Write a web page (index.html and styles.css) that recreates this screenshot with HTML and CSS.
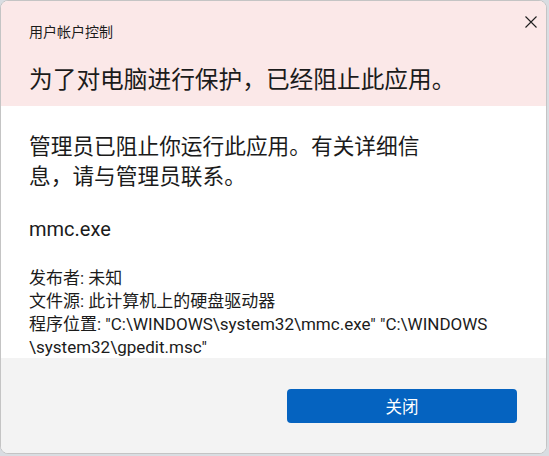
FILE: index.html
```html
<!DOCTYPE html>
<html lang="zh-CN">
<head>
<meta charset="utf-8">
<link rel="stylesheet" href="styles.css">
</head>
<body>
<div class="dialog">
  <div class="header">
    <div class="caption">用户帐户控制</div>
    <button class="close" aria-label="关闭">
      <svg width="12" height="12" viewBox="0 0 12 12"><path d="M0.5 0.5 L11.5 11.5 M11.5 0.5 L0.5 11.5" stroke="#1f1f1f" stroke-width="1.1" fill="none"/></svg>
    </button>
    <h1 class="title">为了对电脑进行保护，已经阻止此应用。</h1>
  </div>
  <div class="content">
    <p class="msg">管理员已阻止你运行此应用。有关详细信<br>息，请与管理员联系。</p>
    <p class="exe">mmc.exe</p>
    <div class="details">
      <div>发布者: 未知</div>
      <div>文件源: 此计算机上的硬盘驱动器</div>
      <div>程序位置: "C:\WINDOWS\system32\mmc.exe" "C:\WINDOWS<br>\system32\gpedit.msc"</div>
    </div>
  </div>
  <div class="footer">
    <button class="btn">关闭</button>
  </div>
</div>
</body>
</html>
```
FILE: styles.css
```css
html, body {
  margin: 0;
  padding: 0;
}
body {
  width: 549px;
  height: 456px;
  background: #d9dde2;
  font-family: Roboto, "Noto Sans CJK SC", sans-serif;
  color: #1b1b1b;
  overflow: hidden;
}
.dialog {
  box-sizing: border-box;
  width: 547px;
  height: 454px;
  display: flex;
  flex-direction: column;
  border: 1px solid #c4c4c4;
  border-radius: 8px;
  overflow: hidden;
  background: #ffffff;
}
.header {
  position: relative;
  box-sizing: border-box;
  height: 105px;
  flex: none;
  background: #fbe8e8;
  padding: 21px 28px 0;
}
.caption {
  font-size: 14px;
  line-height: 20px;
}
.close {
  position: absolute;
  top: 14px;
  right: 8px;
  width: 14px;
  height: 14px;
  padding: 1px;
  border: 0;
  background: transparent;
  display: flex;
}
.title {
  margin: 22px 0 0;
  font-size: 23.7px;
  font-weight: 400;
  line-height: 32px;
  white-space: nowrap;
}
.content {
  box-sizing: border-box;
  height: 252px;
  flex: none;
  padding: 26px 28px 0;
}
.msg {
  margin: 0;
  font-size: 21.7px;
  line-height: 30px;
  white-space: nowrap;
}
.exe {
  margin: 22px 0 0;
  font-size: 20px;
  line-height: 30px;
}
.details {
  margin-top: 23px;
  font-size: 17px;
  line-height: 23px;
  white-space: nowrap;
}
.footer {
  flex: 1;
  background: #f3f3f3;
  display: flex;
  justify-content: flex-end;
  align-items: flex-start;
  padding: 31px 29px 0;
}
.btn {
  width: 230px;
  height: 34px;
  border: 0;
  border-radius: 4px;
  background: #0563c0;
  color: #ffffff;
  font-family: Roboto, "Noto Sans CJK SC", sans-serif;
  font-size: 16.5px;
}
```
